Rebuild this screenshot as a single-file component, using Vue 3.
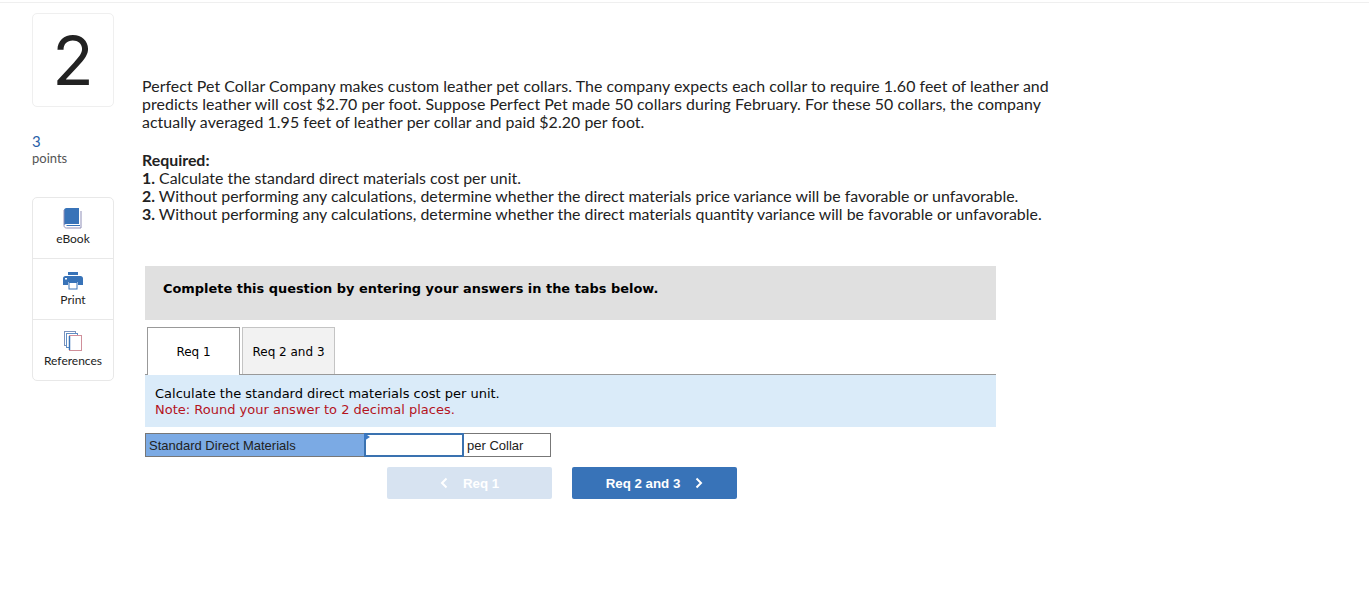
<script setup>
const tools = [
  { id: 'book', label: 'eBook' },
  { id: 'print', label: 'Print' },
  { id: 'refs', label: 'References' }
]
</script>

<template>
  <div class="page">
    <aside class="side">
      <div class="number-card">2</div>
      <div class="points">
        <div class="points-value">3</div>
        <div class="points-label">points</div>
      </div>
      <div class="tools">
        <div v-for="tool in tools" :key="tool.id" class="tool">
          <svg v-if="tool.id === 'book'" width="20" height="22" viewBox="0 0 20 22">
            <path d="M1 3.500C1 2 2 1 3.500 1H16v16H3.500C2.400 17 1.600 17.400 1 18z" fill="#3873b8" />
            <path d="M1 3v15.500C1 20 2 21 3.500 21H18V4" fill="none" stroke="#8f8fb8" stroke-width="1" />
            <path d="M3.500 18.500H17" stroke="#3873b8" stroke-width="1" />
          </svg>
          <svg v-else-if="tool.id === 'print'" width="20" height="19" viewBox="0 0 20 19">
            <rect x="5" y="1" width="10" height="3" fill="#3873b8" />
            <path d="M0 7.500C0 6 1 5 2.500 5h15C19 5 20 6 20 7.500V14h-5v-3H5v3H0z" fill="#3873b8" />
            <rect x="6" y="11.500" width="8" height="6.500" fill="#fff" stroke="#3873b8" />
            <rect x="2" y="7" width="2" height="1.500" fill="#fff" />
          </svg>
          <svg v-else width="18" height="20" viewBox="0 0 18 20">
            <rect x="0.500" y="0.500" width="11" height="14" fill="#fff" stroke="#7b93bd" />
            <rect x="2.500" y="2.500" width="11" height="14" fill="#fff" stroke="#5f8ec4" />
            <rect x="5.500" y="4.500" width="12" height="15" fill="#fff" stroke="#d08f9a" stroke-width="1" />
            <path d="M5.500 5v14" stroke="#3873b8" stroke-width="1.500" />
          </svg>
          <span class="tool-label">{{ tool.label }}</span>
        </div>
      </div>
    </aside>

    <main class="main">
      <div class="problem">
        <p class="intro">Perfect Pet Collar Company makes custom leather pet collars. The company expects each collar to require 1.60 feet of leather and predicts leather will cost $2.70 per foot. Suppose Perfect Pet made 50 collars during February. For these 50 collars, the company actually averaged 1.95 feet of leather per collar and paid $2.20 per foot.</p>
        <p class="required">
          <strong>Required:</strong><br />
          <strong>1.</strong> Calculate the standard direct materials cost per unit.<br />
          <strong>2.</strong> Without performing any calculations, determine whether the direct materials price variance will be favorable or unfavorable.<br />
          <strong>3.</strong> Without performing any calculations, determine whether the direct materials quantity variance will be favorable or unfavorable.
        </p>
      </div>

      <div class="worksheet">
        <div class="banner">Complete this question by entering your answers in the tabs below.</div>

        <div class="tabs">
          <div class="tab active">Req 1</div>
          <div class="tab">Req 2 and 3</div>
        </div>

        <div class="instructions">
          <div>Calculate the standard direct materials cost per unit.</div>
          <div class="note">Note: Round your answer to 2 decimal places.</div>
        </div>

        <div class="answer-row">
          <div class="answer-label">Standard Direct Materials</div>
          <div class="answer-input"><span class="flag"></span></div>
          <div class="answer-unit">per Collar</div>
        </div>

        <div class="nav">
          <div class="nav-btn disabled">
            <svg width="8" height="12" viewBox="0 0 8 12"><path d="M6.500 1.500L2 6l4.500 4.500" fill="none" stroke="#fff" stroke-width="2" /></svg>
            <span>Req 1</span>
          </div>
          <div class="nav-btn">
            <span>Req 2 and 3</span>
            <svg width="8" height="12" viewBox="0 0 8 12"><path d="M1.500 1.500L6 6l-4.500 4.500" fill="none" stroke="#fff" stroke-width="2" /></svg>
          </div>
        </div>
      </div>
    </main>
  </div>
</template>

<style>
html,
body {
  margin: 0;
  background: #fff;
}
</style>

<style scoped>
.page {
  display: flex;
  box-sizing: border-box;
  min-height: 604px;
  margin-top: 2px;
  border-top: 1px solid #efefef;
  padding: 10px 0 0 32px;
  font-family: "Lato", "Liberation Sans", sans-serif;
  color: #222;
}
.side {
  width: 82px;
  flex-shrink: 0;
}
.number-card {
  box-sizing: border-box;
  height: 94px;
  border: 1px solid #efefef;
  border-radius: 5px;
  text-align: center;
  font-family: "Inter", sans-serif;
  font-weight: 400;
  font-size: 68px;
  line-height: 92px;
  color: #222;
}
.points {
  margin-top: 25px;
  height: 65px;
}
.points-value {
  font-size: 15px;
  line-height: 18px;
  color: #2a5fa8;
}
.points-label {
  font-size: 13px;
  line-height: 16px;
  color: #555;
}
.tools {
  border: 1px solid #e8e8e8;
  border-radius: 5px;
}
.tool {
  box-sizing: border-box;
  height: 61px;
  display: flex;
  flex-direction: column;
  align-items: center;
  justify-content: flex-end;
  padding-bottom: 12px;
  gap: 3px;
  border-bottom: 1px solid #e8e8e8;
}
.tool:last-child {
  border-bottom: 0;
  height: 60px;
}
.tool-label {
  font-size: 12px;
  line-height: 14px;
  color: #222;
}
.main {
  margin-left: 28px;
  flex: 1;
}
.problem {
  width: 925px;
  padding-top: 64px;
  font-size: 15.900px;
  line-height: 18px;
}
.problem p {
  margin: 0;
}
.problem .intro {
  letter-spacing: 0.06px;
}
.problem .required {
  margin-top: 20px;
}
.worksheet {
  width: 851px;
  margin-left: 3px;
  margin-top: 43px;
}
.banner {
  box-sizing: border-box;
  height: 54px;
  background: #e0e0e0;
  padding: 14px 18px 0;
  font-family: "DejaVu Sans", sans-serif;
  font-size: 12.930px;
  font-weight: bold;
  line-height: 18px;
  color: #000;
}
.tabs {
  display: flex;
  gap: 2px;
  margin-top: 7px;
  padding-left: 2px;
  height: 47px;
  border-bottom: 1px solid #999;
}
.tab {
  box-sizing: border-box;
  width: 93px;
  height: 47px;
  background: #f2f2f2;
  border: 1px solid #c4c4c4;
  border-bottom: 0;
  text-align: center;
  font-family: "DejaVu Sans", sans-serif;
  font-size: 12px;
  line-height: 48px;
  color: #000;
}
.tab.active {
  height: 48px;
  background: #fff;
  border-color: #999;
  position: relative;
}
.instructions {
  box-sizing: border-box;
  height: 52px;
  background: #daebf9;
  padding: 11px 10px 0;
  font-family: "DejaVu Sans", sans-serif;
  font-size: 13px;
  line-height: 16px;
  color: #000;
}
.note {
  color: #b4141e;
}
.answer-row {
  display: flex;
  width: 406px;
  height: 24px;
  margin-top: 6px;
  font-family: "Liberation Sans", sans-serif;
  font-size: 13px;
  line-height: 23px;
  color: #222;
}
.answer-label {
  box-sizing: border-box;
  width: 219px;
  padding-left: 3px;
  background: #7baae4;
  border: 1px solid #777;
  border-right: 0;
}
.answer-input {
  box-sizing: border-box;
  position: relative;
  width: 100px;
  background: #fff;
  border: 2px solid #3a72b0;
}
.flag {
  position: absolute;
  left: -2px;
  top: -2px;
  border-left: 6px solid #3a78c4;
  border-top: 4px solid transparent;
  border-bottom: 4px solid transparent;
}
.answer-unit {
  box-sizing: border-box;
  flex: 1;
  padding-left: 3px;
  background: #fff;
  border: 1px solid #777;
  border-left: 0;
}
.nav {
  display: flex;
  gap: 20px;
  margin-top: 10px;
  margin-left: 242px;
}
.nav-btn {
  width: 165px;
  height: 32px;
  display: flex;
  align-items: center;
  justify-content: center;
  gap: 15px;
  background: #3873b8;
  border-radius: 2px;
  font-family: "Liberation Sans", sans-serif;
  font-size: 13.300px;
  font-weight: bold;
  color: #fff;
}
.nav-btn.disabled {
  background: #d7e3f1;
}
</style>
